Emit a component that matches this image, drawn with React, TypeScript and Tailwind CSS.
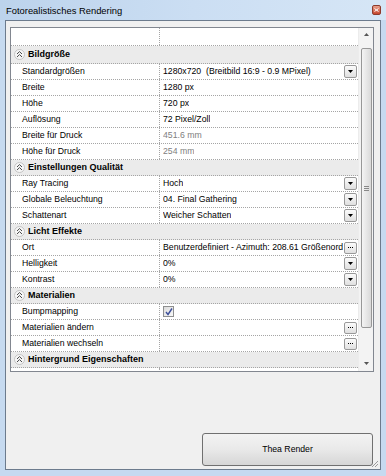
type Row =
  | { kind: 'cat'; label: string }
  | { kind: 'prop'; label: string; value?: string; gray?: boolean; control?: 'drop' | 'dots' | 'check' };

const rows: Row[] = [
  { kind: 'cat', label: 'Bildgröße' },
  { kind: 'prop', label: 'Standardgrößen', value: '1280x720\u00a0\u00a0(Breitbild 16:9 - 0.9 MPixel)', control: 'drop' },
  { kind: 'prop', label: 'Breite', value: '1280 px' },
  { kind: 'prop', label: 'Höhe', value: '720 px' },
  { kind: 'prop', label: 'Auflösung', value: '72 Pixel/Zoll' },
  { kind: 'prop', label: 'Breite für Druck', value: '451.6 mm', gray: true },
  { kind: 'prop', label: 'Höhe für Druck', value: '254 mm', gray: true },
  { kind: 'cat', label: 'Einstellungen Qualität' },
  { kind: 'prop', label: 'Ray Tracing', value: 'Hoch', control: 'drop' },
  { kind: 'prop', label: 'Globale Beleuchtung', value: '04. Final Gathering', control: 'drop' },
  { kind: 'prop', label: 'Schattenart', value: 'Weicher Schatten', control: 'drop' },
  { kind: 'cat', label: 'Licht Effekte' },
  { kind: 'prop', label: 'Ort', value: 'Benutzerdefiniert - Azimuth: 208.61 Größenord', control: 'dots' },
  { kind: 'prop', label: 'Helligkeit', value: '0%', control: 'drop' },
  { kind: 'prop', label: 'Kontrast', value: '0%', control: 'drop' },
  { kind: 'cat', label: 'Materialien' },
  { kind: 'prop', label: 'Bumpmapping', control: 'check' },
  { kind: 'prop', label: 'Materialien ändern', control: 'dots' },
  { kind: 'prop', label: 'Materialien wechseln', control: 'dots' },
  { kind: 'cat', label: 'Hintergrund Eigenschaften' },
];

function CollapseIcon() {
  return (
    <svg width="11" height="11" viewBox="0 0 11 11" className="shrink-0">
      <circle cx="5.5" cy="5.5" r="5" fill="#f6f6f6" stroke="#c4c4c4" />
      <polyline points="3,5 5.5,2.6 8,5" fill="none" stroke="#4a4a4a" strokeWidth="1" />
      <polyline points="3,8 5.5,5.6 8,8" fill="none" stroke="#4a4a4a" strokeWidth="1" />
    </svg>
  );
}

function DropButton() {
  return (
    <div className="ml-auto mr-[1px] w-[13px] h-[13px] shrink-0 rounded-[2px] border border-[#999] bg-gradient-to-b from-[#fbfbfb] to-[#e0e0e0] flex items-center justify-center">
      <svg width="5" height="3" viewBox="0 0 5 3">
        <polygon points="0,0 5,0 2.5,3" fill="#000" />
      </svg>
    </div>
  );
}

function DotsButton() {
  return (
    <div className="ml-auto mr-[1px] w-[13px] h-[12px] shrink-0 rounded-[2px] border border-[#999] bg-gradient-to-b from-[#fbfbfb] to-[#e0e0e0] flex items-center justify-center gap-[1px]">
      <span className="w-[1px] h-[1px] bg-black" />
      <span className="w-[1px] h-[1px] bg-black" />
      <span className="w-[1px] h-[1px] bg-black" />
    </div>
  );
}

function CheckBox() {
  return (
    <div className="w-[11px] h-[11px] border border-[#8e8f8f] bg-gradient-to-br from-[#dcdcdc] to-[#f8f8f8] flex items-center justify-center">
      <svg width="8" height="8" viewBox="0 0 8 8">
        <polyline points="1,4 3,6.5 7,0.5" fill="none" stroke="#3d4f9a" strokeWidth="1.4" />
      </svg>
    </div>
  );
}

export default function App() {
  return (
    <div className="w-[386px] h-[476px] flex flex-col bg-[#c6daf0] text-black font-['Liberation_Sans',Arial,sans-serif]">
      <div className="h-[20px] shrink-0 flex items-start justify-between pl-[6px] pr-[5px] bg-gradient-to-r from-[#bcd3ec] via-[#cbdef3] to-[#d6e6f6]">
        <span className="text-[9.4px] leading-[21px]">Fotorealistisches Rendering</span>
        <div className="mt-[5px] w-[9px] h-[10px] rounded-[2px] border border-[#8d3b2c] bg-gradient-to-b from-[#e9a08c] to-[#c5442c] flex items-center justify-center">
          <svg width="5" height="4" viewBox="0 0 5 4">
            <path d="M0.5 0.5 L4.5 3.5 M4.5 0.5 L0.5 3.5" stroke="#fff" strokeWidth="1" />
          </svg>
        </div>
      </div>

      <div className="relative mx-[5px] h-[450px] shrink-0 border border-[#6c7b8d] bg-[#f0f0f0] flex flex-col pl-[4px] pt-[6px]">
        <div className="w-[364px] h-[345px] border border-[#828790] bg-white flex overflow-hidden">
          <div className="w-[347px] flex flex-col overflow-hidden">
            <div className="h-[18px] shrink-0 flex border-b border-dotted border-[#a5a5a5]">
              <div className="w-[149px] border-r border-dotted border-[#a5a5a5]" />
            </div>
            {rows.map((r, i) =>
              r.kind === 'cat' ? (
                <div
                  key={i}
                  className={`${i === 0 ? 'h-[18px]' : 'h-[16px]'} shrink-0 flex items-center pl-[3px] gap-[3px] bg-[#ebebeb] border-b border-dotted border-[#a5a5a5]`}
                >
                  <CollapseIcon />
                  <span className="text-[9px] font-bold leading-none">{r.label}</span>
                </div>
              ) : (
                <div key={i} className="h-[16px] shrink-0 flex border-b border-dotted border-[#a5a5a5]">
                  <div className="w-[149px] shrink-0 flex items-center pl-[11px] border-r border-dotted border-[#a5a5a5] text-[8.7px]">
                    {r.label}
                  </div>
                  <div className="flex-1 min-w-0 flex items-center pl-[3px] text-[8.7px]">
                    {r.control === 'check' ? (
                      <CheckBox />
                    ) : (
                      <span className={`whitespace-nowrap overflow-hidden ${r.gray ? 'text-[#808080]' : ''}`}>{r.value}</span>
                    )}
                    {r.control === 'drop' && <DropButton />}
                    {r.control === 'dots' && <DotsButton />}
                  </div>
                </div>
              )
            )}
            <div className="h-[6px] shrink-0 flex">
              <div className="w-[149px] border-r border-dotted border-[#a5a5a5]" />
            </div>
          </div>

          <div className="flex-1 flex flex-col bg-[#f3f3f3] border-l border-[#ececec]">
            <div className="h-[20px] shrink-0 flex justify-center pt-[5px]">
              <svg width="5" height="3" viewBox="0 0 5 3">
                <polygon points="0,3 5,3 2.5,0" fill="#555" />
              </svg>
            </div>
            <div className="h-[280px] shrink-0 ml-[2px] mr-[1px] rounded-[2px] border border-[#979797] bg-gradient-to-r from-[#f4f4f4] to-[#d9d9d9] flex flex-col items-center justify-center gap-[1px]">
              <span className="w-[5px] h-[1px] bg-[#888]" />
              <span className="w-[5px] h-[1px] bg-[#888]" />
              <span className="w-[5px] h-[1px] bg-[#888]" />
            </div>
            <div className="flex-1" />
            <div className="h-[14px] shrink-0 flex justify-center pt-[5px]">
              <svg width="5" height="3" viewBox="0 0 5 3">
                <polygon points="0,0 5,0 2.5,3" fill="#555" />
              </svg>
            </div>
          </div>
        </div>

        <button className="mt-[61px] ml-[192px] w-[171px] h-[33px] rounded-[3px] border border-[#707070] bg-gradient-to-b from-[#f3f3f3] via-[#e9e9e9] to-[#d6d6d6] text-[8.7px] flex items-center justify-center">
          Thea Render
        </button>

        <svg width="9" height="9" viewBox="0 0 9 9" className="absolute right-[1px] bottom-[1px]">
          <path d="M8 2 L2 8 M8 5 L5 8 M8 8 L8 8" stroke="#9a9a9a" strokeWidth="1" />
        </svg>
      </div>
    </div>
  );
}
